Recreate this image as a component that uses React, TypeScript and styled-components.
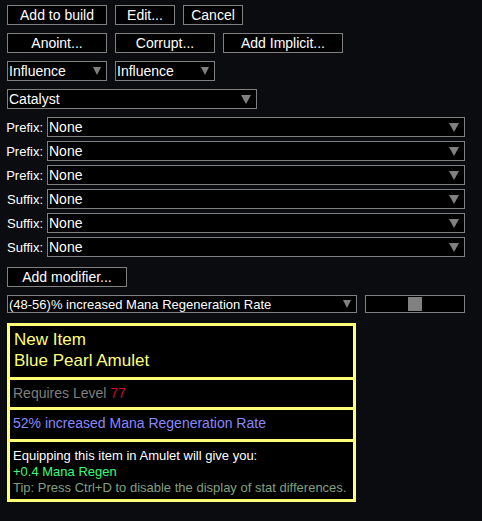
import React from "react";
import styled, { createGlobalStyle } from "styled-components";

const GlobalStyle = createGlobalStyle`
  html, body {
    margin: 0;
    padding: 0;
    background: #0b0c10;
  }
  body {
    font-family: "Liberation Sans", Arial, sans-serif;
    color: #ffffff;
  }
`;

const Page = styled.div`
  width: 482px;
  height: 521px;
  box-sizing: border-box;
  padding: 5px 7px 0 7px;
  display: flex;
  flex-direction: column;
  background: #0b0c10;
`;

const Row = styled.div<{ $mt?: number; $gap?: number }>`
  display: flex;
  align-items: center;
  gap: ${(p) => p.$gap ?? 8}px;
  margin-top: ${(p) => p.$mt ?? 0}px;
`;

const Button = styled.div<{ $w: number }>`
  width: ${(p) => p.$w}px;
  height: 20px;
  box-sizing: border-box;
  border: 1px solid #808080;
  background: #000;
  color: #fff;
  font-size: 14px;
  display: flex;
  align-items: center;
  justify-content: center;
  white-space: nowrap;
`;

const Select = styled.div<{ $w: number; $h?: number; $fs?: number }>`
  width: ${(p) => p.$w}px;
  height: ${(p) => p.$h ?? 20}px;
  box-sizing: border-box;
  border: 1px solid #808080;
  background: #000;
  color: #fff;
  font-size: ${(p) => p.$fs ?? 14}px;
  display: flex;
  align-items: center;
  justify-content: space-between;
  padding: 0 5px 0 1px;
  white-space: nowrap;
`;

const Arrow = styled.span<{ $w: number; $h: number }>`
  width: 0;
  height: 0;
  border-left: ${(p) => p.$w / 2}px solid transparent;
  border-right: ${(p) => p.$w / 2}px solid transparent;
  border-top: ${(p) => p.$h}px solid #808080;
  flex-shrink: 0;
`;

const AffixList = styled.div`
  display: flex;
  flex-direction: column;
  gap: 4px;
  margin-top: 8px;
`;

const AffixLabel = styled.div`
  width: 36px;
  display: flex;
  justify-content: flex-end;
  font-size: 13px;
  color: #fff;
  white-space: nowrap;
`;

const Slider = styled.div`
  width: 100px;
  height: 18px;
  box-sizing: border-box;
  border: 1px solid #808080;
  background: #000;
  display: flex;
  align-items: center;
  justify-content: center;
`;

const Handle = styled.div`
  width: 14px;
  height: 14px;
  background: #808080;
`;

const Tooltip = styled.div`
  width: 349px;
  margin-top: 10px;
  box-sizing: border-box;
  border: 3px solid #ffff77;
  background: #000;
  display: flex;
  flex-direction: column;
`;

const Section = styled.div<{ $pt: number; $pb: number; $first?: boolean }>`
  padding: ${(p) => p.$pt}px 3px ${(p) => p.$pb}px 3px;
  border-top: ${(p) => (p.$first ? "none" : "3px solid #ffff77")};
  display: flex;
  flex-direction: column;
`;

const Title = styled.div`
  font-size: 17px;
  line-height: 21px;
  color: #ffff77;
  padding-left: 1px;
`;

const Line = styled.div<{ $color: string; $fs?: number; $lh?: number }>`
  font-size: ${(p) => p.$fs ?? 14}px;
  line-height: ${(p) => p.$lh ?? 17}px;
  color: ${(p) => p.$color};
  white-space: nowrap;
`;

const Red = styled.span`
  color: #dd0022;
`;

const affixes = ["Prefix:", "Prefix:", "Prefix:", "Suffix:", "Suffix:", "Suffix:"];

export default function App() {
  return (
    <>
      <GlobalStyle />
      <Page>
        <Row>
          <Button $w={100}>Add to build</Button>
          <Button $w={60}>Edit...</Button>
          <Button $w={60}>Cancel</Button>
        </Row>
        <Row $mt={8}>
          <Button $w={100}>Anoint...</Button>
          <Button $w={100}>Corrupt...</Button>
          <Button $w={120}>Add Implicit...</Button>
        </Row>
        <Row $mt={8}>
          <Select $w={100}>
            Influence
            <Arrow $w={9} $h={8} />
          </Select>
          <Select $w={100}>
            Influence
            <Arrow $w={9} $h={8} />
          </Select>
        </Row>
        <Row $mt={8}>
          <Select $w={250}>
            Catalyst
            <Arrow $w={10} $h={9} />
          </Select>
        </Row>
        <AffixList>
          {affixes.map((label, i) => (
            <Row key={i} $gap={4}>
              <AffixLabel>{label}</AffixLabel>
              <Select $w={418}>
                None
                <Arrow $w={10} $h={9} />
              </Select>
            </Row>
          ))}
        </AffixList>
        <Row $mt={10}>
          <Button $w={120}>Add modifier...</Button>
        </Row>
        <Row $mt={8}>
          <Select $w={350} $h={18} $fs={13}>
            (48-56)% increased Mana Regeneration Rate
            <Arrow $w={8} $h={8} />
          </Select>
          <Slider>
            <Handle />
          </Slider>
        </Row>
        <Tooltip>
          <Section $first $pt={3} $pb={6}>
            <Title>New Item</Title>
            <Title>Blue Pearl Amulet</Title>
          </Section>
          <Section $pt={5} $pb={5}>
            <Line $color="#7f7f7f">
              Requires Level <Red>77</Red>
            </Line>
          </Section>
          <Section $pt={5} $pb={7}>
            <Line $color="#8888ff">52% increased Mana Regeneration Rate</Line>
          </Section>
          <Section $pt={6} $pb={3}>
            <Line $color="#ffffff" $fs={13} $lh={16}>
              Equipping this item in Amulet will give you:
            </Line>
            <Line $color="#33ff77" $fs={13} $lh={16}>
              +0.4 Mana Regen
            </Line>
            <Line $color="#80a080" $fs={13} $lh={16}>
              Tip: Press Ctrl+D to disable the display of stat differences.
            </Line>
          </Section>
        </Tooltip>
      </Page>
    </>
  );
}
